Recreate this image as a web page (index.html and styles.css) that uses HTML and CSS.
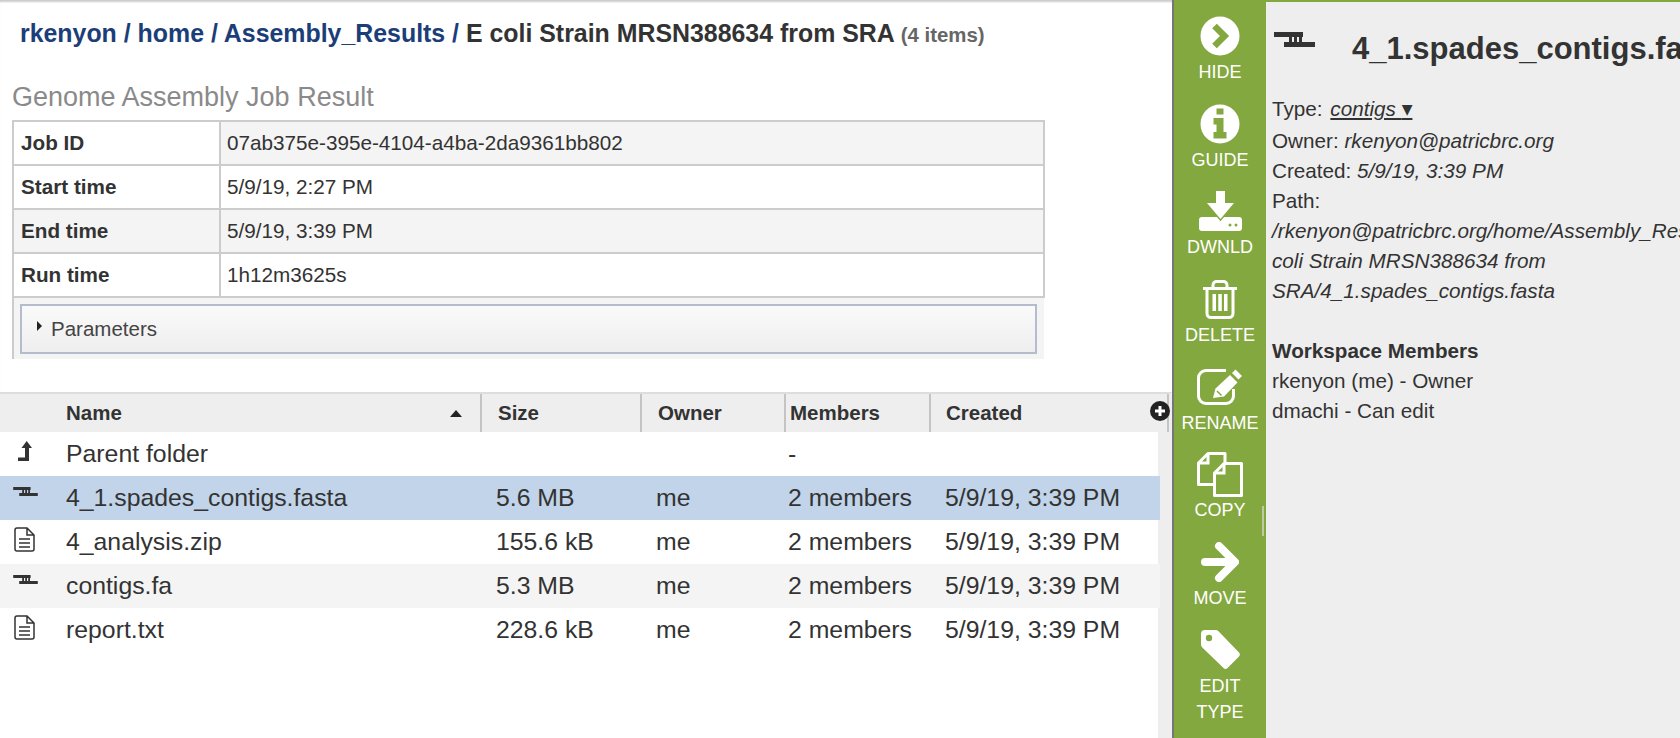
FILE: index.html
```html
<!DOCTYPE html>
<html lang="en">
<head>
    <meta charset="UTF-8">
    <title>E coli Strain MRSN388634 from SRA</title>
    <link rel="stylesheet" href="styles.css">
</head>
<body>
    <main class="content">
        <h1 class="crumbs">
            <a href="#">rkenyon</a> <span class="sep">/</span> <a href="#">home</a> <span class="sep">/</span> <a href="#">Assembly_Results</a> <span class="sep">/</span> E coli Strain MRSN388634 from SRA <span class="count">(4 items)</span>
        </h1>

        <h2 class="job-title">Genome Assembly Job Result</h2>
        <table class="job-table">
            <tr class="shade">
                <th>Job ID</th>
                <td>07ab375e-395e-4104-a4ba-2da9361bb802</td>
            </tr>
            <tr>
                <th>Start time</th>
                <td>5/9/19, 2:27 PM</td>
            </tr>
            <tr class="shade full">
                <th>End time</th>
                <td>5/9/19, 3:39 PM</td>
            </tr>
            <tr>
                <th>Run time</th>
                <td>1h12m3625s</td>
            </tr>
            <tr class="params-row">
                <td colspan="2">
                    <div class="params"><span class="params-arrow"></span>Parameters</div>
                </td>
            </tr>
        </table>

        <section class="grid">
            <div class="grid-head">
                <div></div>
                <div class="head-name">Name<span class="sort-arrow"></span></div>
                <div class="head-cell">Size</div>
                <div class="head-cell">Owner</div>
                <div class="head-cell head-members">Members</div>
                <div class="head-cell head-created">Created</div>
                <!-- column chooser -->
                <svg class="add-col" viewBox="0 0 20 20">
                    <circle cx="10" cy="10" r="10" fill="#222"/>
                    <path d="M8.500 5h3v3.500H15v3h-3.500V15h-3v-3.500H5v-3h3.500z" fill="#fff"/>
                </svg>
            </div>
            <div class="grid-body">
                <div class="rows">
                    <div class="row">
                        <div class="row-icon">
                            <svg class="ico-parent" viewBox="0 0 14 20"><path d="M8.700 0L14 7h-3v13H0v-3.500h7V7H3.500z" fill="#333"/></svg>
                        </div>
                        <div>Parent folder</div>
                        <div></div>
                        <div></div>
                        <div class="cell-members">-</div>
                        <div></div>
                    </div>
                    <div class="row selected">
                        <div class="row-icon">
                            <svg class="ico-contigs" viewBox="0 0 41 15"><path d="M0 0h29v5H0zM10 10h31v5H10zM15 5h3v5h-3zM20 5h3v5h-3zM25 5h3v5h-3z" fill="#333"/></svg>
                        </div>
                        <div>4_1.spades_contigs.fasta</div>
                        <div>5.6 MB</div>
                        <div>me</div>
                        <div class="cell-members">2 members</div>
                        <div>5/9/19, 3:39 PM</div>
                    </div>
                    <div class="row">
                        <div class="row-icon">
                            <svg class="ico-file" viewBox="0 0 21 25"><path d="M3 1h10l7 7v14a2 2 0 0 1-2 2H3a2 2 0 0 1-2-2V3a2 2 0 0 1 2-2zM13 1v7h7M5 12h11M5 16h11M5 20h11" fill="none" stroke="#333" stroke-width="1.500"/></svg>
                        </div>
                        <div>4_analysis.zip</div>
                        <div>155.6 kB</div>
                        <div>me</div>
                        <div class="cell-members">2 members</div>
                        <div>5/9/19, 3:39 PM</div>
                    </div>
                    <div class="row odd">
                        <div class="row-icon">
                            <svg class="ico-contigs" viewBox="0 0 41 15"><path d="M0 0h29v5H0zM10 10h31v5H10zM15 5h3v5h-3zM20 5h3v5h-3zM25 5h3v5h-3z" fill="#333"/></svg>
                        </div>
                        <div>contigs.fa</div>
                        <div>5.3 MB</div>
                        <div>me</div>
                        <div class="cell-members">2 members</div>
                        <div>5/9/19, 3:39 PM</div>
                    </div>
                    <div class="row">
                        <div class="row-icon">
                            <svg class="ico-file" viewBox="0 0 21 25"><path d="M3 1h10l7 7v14a2 2 0 0 1-2 2H3a2 2 0 0 1-2-2V3a2 2 0 0 1 2-2zM13 1v7h7M5 12h11M5 16h11M5 20h11" fill="none" stroke="#333" stroke-width="1.500"/></svg>
                        </div>
                        <div>report.txt</div>
                        <div>228.6 kB</div>
                        <div>me</div>
                        <div class="cell-members">2 members</div>
                        <div>5/9/19, 3:39 PM</div>
                    </div>
                </div>
            </div>
        </section>
    </main>

    <nav class="actions">
        <a class="action" href="#">
            <span class="action-icon">
                <svg width="40" height="40" viewBox="0 0 40 40">
                    <circle cx="20" cy="20" r="19.500" fill="#fff"/>
                    <path d="M14.500 10l10 10-10 10" fill="none" stroke="#84a840" stroke-width="6.500"/>
                </svg>
            </span>
            HIDE
        </a>
        <a class="action" href="#">
            <span class="action-icon">
                <svg width="40" height="40" viewBox="0 0 40 40">
                    <circle cx="20" cy="20" r="19.500" fill="#fff"/>
                    <path d="M16.500 4.500h7v6h-7zM13.500 14h10v14h3v6.500h-13V28h3v-7.500h-3z" fill="#84a840"/>
                </svg>
            </span>
            GUIDE
        </a>
        <a class="action" href="#">
            <span class="action-icon">
                <svg width="43" height="40" viewBox="0 0 43 40">
                    <rect x="0" y="26" width="43" height="14" rx="3" fill="#fff"/>
                    <path d="M17 0h9v12h9L21.500 28 8 12h9z" fill="#fff" stroke="#84a840" stroke-width="3" paint-order="stroke"/>
                    <circle cx="31" cy="34" r="1.500" fill="#84a840"/>
                    <circle cx="37" cy="34" r="1.500" fill="#84a840"/>
                </svg>
            </span>
            DWNLD
        </a>
        <a class="action" href="#">
            <span class="action-icon">
                <svg width="36" height="39" viewBox="0 0 36 39">
                    <path d="M1 8.500h34M11 8V5a3.500 3.500 0 0 1 3.500-3.500h7A3.500 3.500 0 0 1 25 5v3M5 9v24.500a4 4 0 0 0 4 4h18a4 4 0 0 0 4-4V9" fill="none" stroke="#fff" stroke-width="3"/>
                    <path d="M10.500 14h3.500v17h-3.500zM16.300 14h3.500v17h-3.500zM22 14h3.500v17H22z" fill="#fff"/>
                </svg>
            </span>
            DELETE
        </a>
        <a class="action" href="#">
            <span class="action-icon">
                <svg width="46" height="36" viewBox="0 0 46 36">
                    <path d="M29 1.500H9A7.500 7.500 0 0 0 1.500 9v18A7.500 7.500 0 0 0 9 34.500h20a7.500 7.500 0 0 0 7.500-7.500v-7" fill="none" stroke="#fff" stroke-width="3"/>
                    <path d="M16 29l2.500-9.500L33 6l7.500 7.500L27 27.500z" fill="#fff"/>
                    <path d="M35 4l3.500-3.500 6.500 6.500-3.500 3.500z" fill="#fff"/>
                    <path d="M20 22l4.500 4.500" stroke="#84a840" stroke-width="1.500"/>
                </svg>
            </span>
            RENAME
        </a>
        <a class="action" href="#">
            <span class="action-icon">
                <svg width="46" height="45" viewBox="0 0 46 45">
                    <path d="M11 1.500h17v31H1.500V11z" fill="none" stroke="#fff" stroke-width="3" stroke-linejoin="round"/>
                    <path d="M11 1.500V11H1.500" fill="none" stroke="#fff" stroke-width="3"/>
                    <path d="M27 11.500h17.500v32h-27V21z" fill="#84a840" stroke="#fff" stroke-width="3" stroke-linejoin="round"/>
                    <path d="M27 11.500V21h-9.500" fill="none" stroke="#fff" stroke-width="3"/>
                </svg>
            </span>
            COPY
        </a>
        <a class="action" href="#">
            <span class="action-icon">
                <svg width="38" height="40" viewBox="0 0 38 40">
                    <path d="M4 20h29M18 4l16 16-16 16" fill="none" stroke="#fff" stroke-width="8" stroke-linecap="round" stroke-linejoin="round"/>
                </svg>
            </span>
            MOVE
        </a>
        <a class="action" href="#">
            <span class="action-icon">
                <svg width="39" height="39" viewBox="0 0 39 39">
                    <path d="M4 0h10.500a4 4 0 0 1 3 1.300L38 22.500a3 3 0 0 1 0 4L26.500 38a3 3 0 0 1-4 0L1.300 17.500a4 4 0 0 1-1.300-3V4a4 4 0 0 1 4-4z" fill="#fff"/>
                    <circle cx="8" cy="8" r="3.200" fill="#84a840"/>
                </svg>
            </span>
            EDIT<br>TYPE
        </a>
        <span class="actions-scroll"></span>
    </nav>

    <aside class="details">
        <div class="details-head">
            <svg class="details-icon" viewBox="0 0 41 15"><path d="M0 0h29v5H0zM10 10h31v5H10zM15 5h3v5h-3zM20 5h3v5h-3zM25 5h3v5h-3z" fill="#333"/></svg>
            <h2 class="details-name">4_1.spades_contigs.fasta</h2>
        </div>
        <div class="details-type">Type: <a class="type-link" href="#">contigs <span class="type-caret">&#9660;</span></a></div>
        <div>Owner: <em>rkenyon@patricbrc.org</em></div>
        <div>Created: <em>5/9/19, 3:39 PM</em></div>
        <div>Path:</div>
        <div><em>/rkenyon@patricbrc.org/home/Assembly_Results/E<br>coli Strain MRSN388634 from<br>SRA/4_1.spades_contigs.fasta</em></div>
        <h3 class="members-title">Workspace Members</h3>
        <div>rkenyon (me) - Owner</div>
        <div>dmachi - Can edit</div>
    </aside>
</body>
</html>
```

FILE: styles.css
```css
html, body {
    margin: 0;
    height: 100%;
}

body {
    display: flex;
    height: 738px;
    overflow: hidden;
    font-family: "Liberation Sans", Arial, sans-serif;
    color: #333;
    background: #fff;
}

a {
    color: inherit;
    text-decoration: none;
}

/* Left side */
.content {
    width: 1172px;
    flex: none;
    display: flex;
    flex-direction: column;
    box-shadow: inset 0 3px 2px -1px #ccc;
}

.crumbs {
    margin: 0 0 0 20px;
    font-size: 24.9px;
    line-height: 66px;
    font-weight: bold;
    white-space: nowrap;
}

.crumbs a, .crumbs .sep {
    color: #1c3e78;
}

.crumbs .count {
    font-size: 20.4px;
    color: #666;
}

.job-title {
    margin: 14px 0 8px 12px;
    font-size: 27px;
    line-height: 30px;
    font-weight: normal;
    color: #8a8a8a;
}

.job-table {
    width: 1033px;
    margin-left: 12px;
    border-collapse: collapse;
    table-layout: fixed;
    font-size: 20.7px;
}

.job-table th, .job-table td {
    height: 42px;
    padding: 0 0 0 6px;
    border: 2px solid #ccc;
    text-align: left;
}

.job-table th {
    width: 198px;
    padding-left: 7px;
    font-weight: bold;
}

.job-table .shade td, .job-table .shade.full th {
    background: #f4f4f4;
}

.job-table .params-row td {
    height: 50px;
    padding: 6px 7px 5px 6px;
    border-right: none;
    border-bottom: none;
    background: #f4f4f4;
}

.params {
    display: flex;
    align-items: center;
    height: 46px;
    border: 2px solid #b5bccb;
    background: linear-gradient(#fafafa, #eee);
    color: #444;
    font-size: 20.5px;
}

.params-arrow {
    width: 0;
    height: 0;
    margin: -6px 9px 0 15px;
    border-left: 5px solid #222;
    border-top: 5px solid transparent;
    border-bottom: 5px solid transparent;
}

/* File grid */
.grid {
    flex: 1;
    margin-top: 33px;
    display: flex;
    flex-direction: column;
    min-height: 0;
}

.grid-head, .row {
    display: grid;
    grid-template-columns: 66px 414px 160px 144px 145px 1fr;
    align-items: center;
}

.grid-head {
    position: relative;
    height: 38px;
    border-top: 2px solid #ddd;
    background: #eee;
    font-size: 20.5px;
    font-weight: bold;
    border-right: 3px solid #eee;
}

.head-name {
    display: flex;
    justify-content: space-between;
    align-items: center;
    padding-right: 18px;
}

.head-cell {
    align-self: stretch;
    display: flex;
    align-items: center;
    padding-left: 16px;
    border-left: 2px solid #c4c4c4;
}

.head-members {
    padding-left: 4px;
}

.head-created {
    padding-left: 15px;
    border-right: 2px solid #c4c4c4;
}

.sort-arrow {
    width: 0;
    height: 0;
    border-left: 6px solid transparent;
    border-right: 6px solid transparent;
    border-bottom: 7px solid #222;
}

.add-col {
    position: absolute;
    right: -1px;
    top: 7px;
    width: 20px;
    height: 20px;
}

.grid-body {
    flex: 1;
    min-height: 0;
    background: #eee;
}

.rows {
    box-sizing: border-box;
    width: 1160px;
    height: 100%;
    background: #fff;
    border-right: 2px solid #eee;
    font-size: 24.8px;
}

.row {
    height: 44px;
    margin-right: -2px;
    white-space: nowrap;
}

.row > div:nth-child(n+3) {
    padding-left: 16px;
}

.row > div.cell-members {
    padding-left: 4px;
}

.row.selected {
    background: #c1d4e9;
}

.row.odd {
    background: #f4f4f4;
}

.row-icon {
    display: flex;
    align-items: center;
}

.ico-parent {
    width: 14px;
    height: 20px;
    margin: 0 0 6px 18px;
}

.ico-contigs {
    width: 25px;
    height: 9px;
    margin: 0 0 14px 13px;
}

.ico-file {
    width: 21px;
    height: 25px;
    margin: 0 0 5px 14px;
}

/* Green action bar */
.actions {
    position: relative;
    box-sizing: border-box;
    width: 94px;
    flex: none;
    border-left: 2px solid #777;
    background: #84a840;
    color: #fff;
    font-size: 18px;
    line-height: 26px;
    text-align: center;
}

.action {
    display: block;
    height: 87.7px;
}

.action-icon {
    display: flex;
    align-items: center;
    justify-content: center;
    height: 46px;
    padding: 13px 0 0;
}

.actions-scroll {
    position: absolute;
    right: 2px;
    top: 506px;
    width: 2px;
    height: 30px;
    background: #bccaa6;
}

/* Details */
.details {
    flex: 1;
    min-width: 0;
    box-sizing: border-box;
    height: 738px;
    padding-left: 6px;
    overflow: hidden;
    border-top: 2px solid #84a840;
    background: #eee;
    font-size: 20.7px;
    line-height: 30px;
    white-space: nowrap;
}

.details-head {
    display: flex;
    height: 92px;
}

.details-icon {
    flex: none;
    width: 41px;
    height: 15px;
    margin: 30px 0 0 2px;
}

.details-name {
    margin: 29px 0 0 37px;
    font-size: 31px;
    line-height: 36px;
    font-weight: bold;
}

.details-type {
    margin-bottom: 2px;
}

.type-link {
    margin-left: 2px;
    font-style: italic;
    text-decoration: underline;
}

.type-caret {
    font-family: "DejaVu Sans", sans-serif;
    font-style: normal;
    font-size: 14px;
    vertical-align: 2px;
}

.members-title {
    margin: 30px 0 0;
    font-size: 20.7px;
    line-height: 30px;
    font-weight: bold;
}
```
